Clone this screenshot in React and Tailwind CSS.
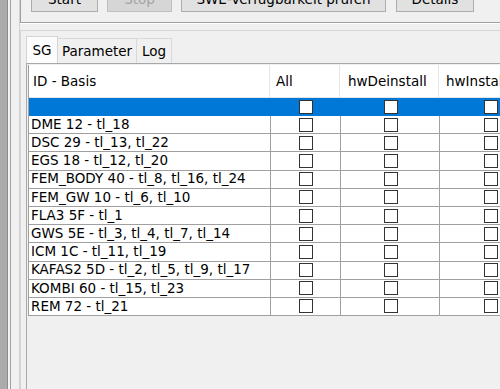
import React from 'react';

const rows = [
  '',
  'DME 12 - tl_18',
  'DSC 29 - tl_13, tl_22',
  'EGS 18 - tl_12, tl_20',
  'FEM_BODY 40 - tl_8, tl_16, tl_24',
  'FEM_GW 10 - tl_6, tl_10',
  'FLA3 5F - tl_1',
  'GWS 5E - tl_3, tl_4, tl_7, tl_14',
  'ICM 1C - tl_11, tl_19',
  'KAFAS2 5D - tl_2, tl_5, tl_9, tl_17',
  'KOMBI 60 - tl_15, tl_23',
  'REM 72 - tl_21',
];

function Box() {
  return <div className="w-[14px] h-[14px] border border-[#333] bg-white" />;
}

export default function App() {
  return (
    <div className="w-[500px] h-[389px] overflow-hidden bg-[#f0f0f0] flex text-black font-['DejaVu_Sans',sans-serif] text-[13.5px]">
      {/* left window edges */}
      <div className="w-[8px] h-full bg-[#ababab] border-r border-[#8c8c8c]" />
      <div className="w-[2px] h-full bg-[#f4f4f4]" />
      <div className="w-[1px] h-full bg-[#a0a0a0]" />
      <div className="w-[9px] h-full bg-[#f0f0f0] border-r border-[#d0d0d0]" />

      <div className="flex-1 flex flex-col min-w-0">
        {/* button group */}
        <div className="h-[23px] shrink-0 border-l border-b border-[#a0a0a0] shadow-[0_1px_0_#fff] pl-[10px] flex gap-[9px] items-start">
          <button className="w-[67px] h-[26px] -mt-[14px] bg-[#e1e1e1] border border-[#adadad] shrink-0">Start</button>
          <button className="w-[65px] h-[26px] -mt-[14px] bg-[#d6d6d6] border border-[#bfbfbf] text-[#a3a3a3] shrink-0">Stop</button>
          <button className="w-[205px] h-[26px] -mt-[14px] bg-[#e1e1e1] border border-[#adadad] shrink-0">SWE-Verfügbarkeit prüfen</button>
          <button className="w-[78px] h-[26px] -mt-[14px] ml-[1px] bg-[#e1e1e1] border border-[#adadad] shrink-0">Details</button>
        </div>

        {/* tab widget */}
        <div className="mt-[7px] flex-1 flex flex-col border-l border-t border-[#d6d6d6] pl-[5px] min-h-0">
          <div className="h-[32px] flex items-end shrink-0">
            <div className="w-[32px] h-[27px] bg-[#fcfcfc] border border-b-0 border-[#d4d4d4] flex items-center justify-center pt-[1px]">SG</div>
            <div className="w-[79px] h-[25px] bg-[#f0f0f0] border-t border-r border-[#d9d9d9] flex items-center justify-center">Parameter</div>
            <div className="w-[35px] h-[25px] bg-[#f0f0f0] border-t border-r border-[#d9d9d9] flex items-center justify-center">Log</div>
          </div>
          <div className="flex-1 border-l border-t border-[#a8a8a8] pl-[1px] pt-[1px] overflow-hidden">
            <div className="w-[540px] border-l border-[#a0a0a0]">
              {/* header */}
              <div className="h-[33px] flex bg-white border-b border-[#e5e5e5]">
                <div className="w-[241px] shrink-0 border-r border-[#e5e5e5] flex items-center pl-[4px]">ID - Basis</div>
                <div className="w-[70px] shrink-0 border-r border-[#e5e5e5] flex items-center pl-[6px]">All</div>
                <div className="w-[99px] shrink-0 border-r border-[#e5e5e5] flex items-center pl-[8px]">hwDeinstall</div>
                <div className="w-[102px] shrink-0 flex items-center pl-[7px]">hwInstall</div>
              </div>
              {rows.map((r, i) => (
                <div
                  key={i}
                  className={
                    i === 0
                      ? 'h-[18px] flex bg-[#0078d7] border-b border-[#0078d7]'
                      : 'h-[18.2px] flex bg-white border-b border-[#a0a0a0]'
                  }
                >
                  <div className="w-[241px] shrink-0 flex items-center pl-[2px] leading-none">{r}</div>
                  <div className={(i === 0 ? 'border-[#0078d7]' : 'border-[#a0a0a0]') + ' w-[70px] shrink-0 border-l flex items-center justify-center'}>
                    <Box />
                  </div>
                  <div className={(i === 0 ? 'border-[#0078d7]' : 'border-[#a0a0a0]') + ' w-[99px] shrink-0 border-l flex items-center justify-center pl-[2px]'}>
                    <Box />
                  </div>
                  <div className={(i === 0 ? 'border-[#0078d7]' : 'border-[#a0a0a0]') + ' w-[102px] shrink-0 border-l flex items-center justify-center'}>
                    <Box />
                  </div>
                </div>
              ))}
            </div>
          </div>
        </div>
      </div>
    </div>
  );
}
